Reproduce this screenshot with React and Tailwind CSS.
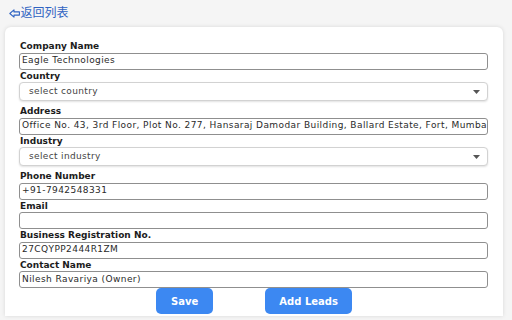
import React from "react";

const font = { fontFamily: '"DejaVu Sans", "Noto Sans CJK SC", sans-serif' };

function Label({ children }) {
  return (
    <div className="h-[12.5px] leading-[12.5px] text-[9px] font-bold text-[#1c1c1c] pl-[1px] whitespace-nowrap">
      {children}
    </div>
  );
}

function TextInput({ value }) {
  return (
    <div className="h-[17px] border border-[#8f8f8f] rounded-[3px] bg-white flex items-center px-[2px] overflow-hidden whitespace-nowrap text-[9px] tracking-[0.42px] text-[#2a2a2a]">
      {value}
    </div>
  );
}

function Select({ placeholder }) {
  return (
    <div className="h-[19px] mb-[4px] border border-[#d2d2d2] rounded-[4px] bg-white shadow-[0_1px_2px_rgba(0,0,0,0.12)] flex items-center justify-between pl-[9px] pr-[7px] text-[9px] tracking-[0.35px] text-[#444]">
      <span>{placeholder}</span>
      <svg width="7" height="4" viewBox="0 0 7 4">
        <path d="M0 0 L7 0 L3.5 4 Z" fill="#555" />
      </svg>
    </div>
  );
}

export default function App() {
  return (
    <div style={font} className="w-[512px] h-[320px] overflow-hidden bg-[#f5f5f5]">
      <div className="h-[27px] pl-[9px] pt-[5px] flex items-start">
        <div className="flex items-center h-[16px] text-[12px] leading-[16px] text-[#2f63c2] whitespace-nowrap">
          <svg width="11" height="9" viewBox="0 0 11 9" className="mr-[0.5px]">
            <path
              d="M0.8 4.5 L5 0.9 L5 2.9 L10.4 2.9 L10.4 6.1 L5 6.1 L5 8.1 Z"
              fill="none"
              stroke="#2f63c2"
              strokeWidth="1.1"
              strokeLinejoin="round"
            />
          </svg>
          <span>返回列表</span>
        </div>
      </div>
      <div className="ml-[5px] w-[498px] h-[289px] bg-white rounded-t-[6px] shadow-[0_0_4px_rgba(0,0,0,0.12)] pl-[14px] pr-[15px] pt-[13px]">
        <Label>Company Name</Label>
        <TextInput value="Eagle Technologies" />
        <Label>Country</Label>
        <Select placeholder="select country" />
        <Label>Address</Label>
        <TextInput value="Office No. 43, 3rd Floor, Plot No. 277, Hansaraj Damodar Building, Ballard Estate, Fort, Mumbai" />
        <Label>Industry</Label>
        <Select placeholder="select industry" />
        <Label>Phone Number</Label>
        <TextInput value="+91-7942548331" />
        <Label>Email</Label>
        <TextInput value="" />
        <Label>Business Registration No.</Label>
        <TextInput value="27CQYPP2444R1ZM" />
        <Label>Contact Name</Label>
        <TextInput value="Nilesh Ravariya (Owner)" />
        <div className="flex justify-center gap-[52px] pl-[1px]">
          <button className="h-[26px] px-[15px] rounded-[5px] bg-[#3c88f2] text-white text-[10px] font-bold">
            Save
          </button>
          <button className="h-[26px] px-[14px] rounded-[5px] bg-[#3c88f2] text-white text-[10px] font-bold">
            Add Leads
          </button>
        </div>
      </div>
    </div>
  );
}
